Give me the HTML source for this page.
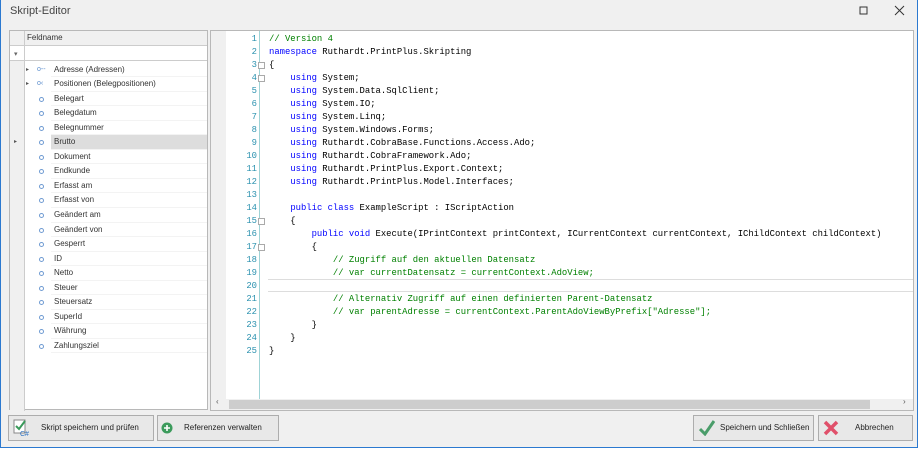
<!DOCTYPE html><html><head><meta charset="utf-8"><style>
*{margin:0;padding:0;box-sizing:border-box}
body{width:920px;height:450px;background:#fff;position:relative;overflow:hidden;font-family:"Liberation Sans",sans-serif}
#win{position:absolute;left:0;top:0;width:918px;height:448px;background:#f0f0f0;border:1px solid #2b79d0;border-top:none}
.a{position:absolute}
#title{left:9px;top:5px;font-size:11px;color:#444}
#left{left:8px;top:30px;width:199px;height:380px;background:#fff;border:1px solid #b8b8b8}
.row{position:absolute;left:0;width:197px;height:14.5px;font-size:8px;color:#333;line-height:14.5px}
.row .t{position:absolute;left:41px;right:0;top:0;bottom:0;padding-left:3px;border-bottom:1px solid #f3f3f3}
.dot{position:absolute;left:29px;top:5px;width:5px;height:5px;border:1.3px solid #6f9bd2;border-radius:50%}
#ed{left:209px;top:30px;width:704px;height:381px;background:#fff;border:1px solid #b8b8b8}
#gut{left:0;top:0;width:15px;height:368px;background:#f0f0f0}
.ln{position:absolute;left:15px;width:31px;text-align:right;font-family:"Liberation Mono",monospace;font-size:8.9px;color:#2b91af;height:13px;line-height:13px}
.cl{position:absolute;left:58px;font-family:"Liberation Mono",monospace;font-size:8.9px;white-space:pre;height:13px;line-height:13px;color:#000}
.k{color:#0000ff}.c{color:#008000}
.btn{position:absolute;top:415px;height:26px;border:1px solid #adadad;background:#e8e8e8;font-size:8px;color:#222;line-height:24px}
</style></head><body><div id="win">
<div class="a" id="title">Skript-Editor</div>
<svg class="a" style="left:858px;top:6px" width="10" height="10"><rect x="1" y="1" width="7" height="7" fill="none" stroke="#333"/></svg>
<svg class="a" style="left:893px;top:5px" width="12" height="12"><path d="M1 1L10 10M10 1L1 10" stroke="#333" stroke-width="1"/></svg>
<div class="a" id="left">
<div class="a" style="left:0;top:0;width:197px;height:15px;background:#f0f0f0;border-bottom:1px solid #ccc"></div>
<div class="a" style="left:14px;top:0;width:1px;height:380px;background:#ccc"></div>
<div class="a" style="left:17px;top:2px;font-size:8px;color:#333">Feldname</div>
<div class="a" style="left:0;top:15px;width:197px;height:15px;border-bottom:1px solid #ccc"></div>
<div class="a" style="left:4px;top:19px;font-size:7px;color:#666">▾</div>
<div class="a" style="left:0;top:30px;width:14px;height:350px;background:#f0f0f0"></div>
<div id="rows"></div>
</div>
<div class="a" id="ed">
<div class="a" id="gut"></div>
<div class="a" style="left:48px;top:0;width:1px;height:368px;background:#9fd3d6"></div>
<div class="a" style="left:57px;top:248px;width:645px;height:13px;border-top:1px solid #ddd;border-bottom:1px solid #ddd"></div>
<div id="code"></div>
<div class="a" style="left:0;top:368px;width:702px;height:11px;background:#f0f0f0"></div>
<div class="a" style="left:18px;top:369px;width:641px;height:9px;background:#cdcdcd"></div>
<div class="a" style="left:5px;top:366px;font-size:8px;color:#555">‹</div>
<div class="a" style="left:692px;top:366px;font-size:8px;color:#555">›</div>
</div>
<div class="btn" style="left:7px;width:146px"><svg class="a" style="left:3px;top:3px" width="18" height="18"><rect x="2" y="1" width="11" height="13" fill="#fff" stroke="#888"/><path d="M4 7l3 3 6-8" stroke="#3a9a5b" stroke-width="2" fill="none"/><text x="8" y="17" font-size="7" fill="#2a6fc0" font-family="Liberation Sans">C#</text></svg><span class="a" style="left:32px">Skript speichern und prüfen</span></div>
<div class="btn" style="left:156px;width:122px"><svg class="a" style="left:3px;top:6px" width="12" height="12"><circle cx="6" cy="6" r="5.5" fill="#3c9b5c"/><path d="M6 3v6M3 6h6" stroke="#fff" stroke-width="1.6"/></svg><span class="a" style="left:26px">Referenzen verwalten</span></div>
<div class="btn" style="left:692px;width:121px"><svg class="a" style="left:5px;top:4px" width="16" height="16"><path d="M1 9l5 5 9-13" stroke="#4a9d6a" stroke-width="3" fill="none"/></svg><span class="a" style="left:26px">Speichern und Schließen</span></div>
<div class="btn" style="left:817px;width:95px"><svg class="a" style="left:4px;top:4px" width="16" height="16"><path d="M2 2L14 14M14 2L2 14" stroke="#e0506a" stroke-width="3.5"/></svg><span class="a" style="left:36px">Abbrechen</span></div>
</div>
<script>
var names=["Adresse (Adressen)","Positionen (Belegpositionen)","Belegart","Belegdatum","Belegnummer","Brutto","Dokument","Endkunde","Erfasst am","Erfasst von","Geändert am","Geändert von","Gesperrt","ID","Netto","Steuer","Steuersatz","SuperId","Währung","Zahlungsziel"];
var h="";names.forEach(function(n,i){var top=31.5+i*14.55;var ic=i<2?'<span style="position:absolute;left:16px;font-size:6px;color:#555">▸</span><span style="position:absolute;left:27px;font-size:7px;color:#5a8ccc">'+(i==0?'o‑‑':'o‹')+'</span>':'<div class="dot"></div>';var sel=i==5?'background:#ddd;':'';var ind=i==5?'<span style="position:absolute;left:4px;font-size:6px;color:#555">▸</span>':'';h+='<div class="row" style="top:'+top+'px">'+ind+ic+'<div class="t" style="'+sel+'">'+n+'</div></div>';});
document.getElementById('rows').innerHTML=h;
var L=['<span class="c">// Version 4</span>','<span class="k">namespace</span> Ruthardt.PrintPlus.Skripting','{','    <span class="k">using</span> System;','    <span class="k">using</span> System.Data.SqlClient;','    <span class="k">using</span> System.IO;','    <span class="k">using</span> System.Linq;','    <span class="k">using</span> System.Windows.Forms;','    <span class="k">using</span> Ruthardt.CobraBase.Functions.Access.Ado;','    <span class="k">using</span> Ruthardt.CobraFramework.Ado;','    <span class="k">using</span> Ruthardt.PrintPlus.Export.Context;','    <span class="k">using</span> Ruthardt.PrintPlus.Model.Interfaces;','','    <span class="k">public class</span> ExampleScript : IScriptAction','    {','        <span class="k">public void</span> Execute(IPrintContext printContext, ICurrentContext currentContext, IChildContext childContext)','        {','            <span class="c">// Zugriff auf den aktuellen Datensatz</span>','            <span class="c">// var currentDatensatz = currentContext.AdoView;</span>','','            <span class="c">// Alternativ Zugriff auf einen definierten Parent-Datensatz</span>','            <span class="c">// var parentAdresse = currentContext.ParentAdoViewByPrefix["Adresse"];</span>','        }','    }','}'];
var c="";L.forEach(function(s,i){var t=2+i*13;c+='<div class="ln" style="top:'+t+'px">'+(i+1)+'</div><div class="cl" style="top:'+t+'px">'+s+'</div>';if(i==2||i==3||i==14||i==16)c+='<div class="a" style="left:47px;top:'+(t+3)+'px;width:7px;height:7px;border:1px solid #aaa;background:#fff"></div>';});
document.getElementById('code').innerHTML=c;
</script>
</body></html>
